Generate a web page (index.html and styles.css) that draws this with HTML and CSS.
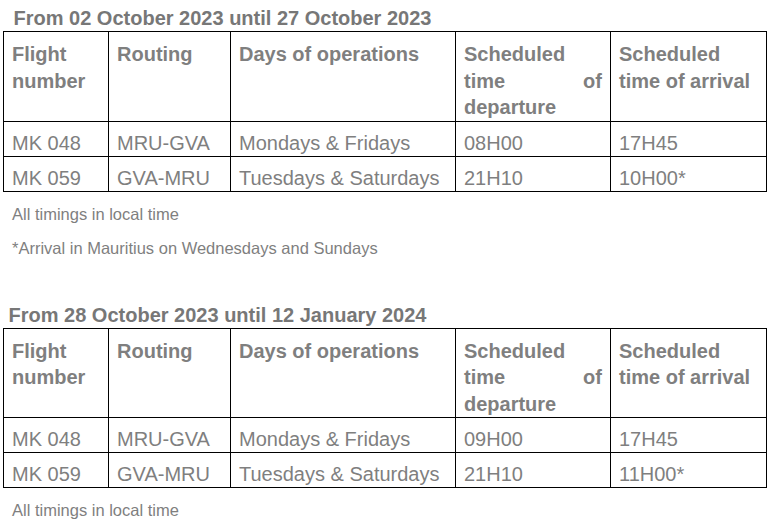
FILE: index.html
```html
<!DOCTYPE html>
<html lang="en">
<head>
<meta charset="utf-8">
<title>Flight schedule</title>
<link rel="stylesheet" href="styles.css">
</head>
<body>
<div class="page">
  <section class="period">
    <h2 class="period-title">From 02 October 2023 until 27 October 2023</h2>
    <table class="schedule">
      <colgroup>
        <col class="c-flight"><col class="c-route"><col class="c-days"><col class="c-dep"><col class="c-arr">
      </colgroup>
      <thead>
        <tr>
          <th>Flight number</th>
          <th>Routing</th>
          <th>Days of operations</th>
          <th class="justify">Scheduled time of departure</th>
          <th>Scheduled time of arrival</th>
        </tr>
      </thead>
      <tbody>
        <tr><td>MK 048</td><td>MRU-GVA</td><td>Mondays &amp; Fridays</td><td>08H00</td><td>17H45</td></tr>
        <tr><td>MK 059</td><td>GVA-MRU</td><td>Tuesdays &amp; Saturdays</td><td>21H10</td><td>10H00*</td></tr>
      </tbody>
    </table>
    <p class="note first">All timings in local time</p>
    <p class="note">*Arrival in Mauritius on Wednesdays and Sundays</p>
  </section>

  <section class="period second">
    <h2 class="period-title shifted">From 28 October 2023 until 12 January 2024</h2>
    <table class="schedule">
      <colgroup>
        <col class="c-flight"><col class="c-route"><col class="c-days"><col class="c-dep"><col class="c-arr">
      </colgroup>
      <thead>
        <tr>
          <th>Flight number</th>
          <th>Routing</th>
          <th>Days of operations</th>
          <th class="justify">Scheduled time of departure</th>
          <th>Scheduled time of arrival</th>
        </tr>
      </thead>
      <tbody>
        <tr><td>MK 048</td><td>MRU-GVA</td><td>Mondays &amp; Fridays</td><td>09H00</td><td>17H45</td></tr>
        <tr><td>MK 059</td><td>GVA-MRU</td><td>Tuesdays &amp; Saturdays</td><td>21H10</td><td>11H00*</td></tr>
      </tbody>
    </table>
    <p class="note first">All timings in local time</p>
  </section>
</div>
</body>
</html>
```

FILE: styles.css
```css
html, body {
  margin: 0;
  padding: 0;
  background: #ffffff;
}

body {
  font-family: "Liberation Sans", Arial, sans-serif;
  color: #7f7f7f;
}

.page {
  padding: 7px 0 0 3px;
}

.period-title {
  margin: 0 0 1px 0;
  padding-left: 10.5px;
  font-size: 20px;
  line-height: 23px;
  font-weight: bold;
  color: #777777;
}

.period-title.shifted {
  padding-left: 5.5px;
}

.period.second {
  margin-top: 46px;
}

.schedule {
  border-collapse: collapse;
  table-layout: fixed;
  width: 763px;
  font-size: 20px;
}

.c-flight { width: 105px; }
.c-route { width: 122px; }
.c-days { width: 225px; }
.c-dep { width: 155px; }
.c-arr { width: 156px; }

.schedule th,
.schedule td {
  border: 1px solid #000000;
  text-align: left;
  vertical-align: top;
}

.schedule th {
  padding: 9px 8px 0 8px;
  font-weight: bold;
  line-height: 26.5px;
}

.schedule th.justify {
  text-align: justify;
}

.schedule td {
  padding: 8px 8px 0 8px;
  line-height: 26px;
  font-weight: normal;
  white-space: nowrap;
}

.note {
  margin: 0 0 14px 0;
  padding-left: 9px;
  font-size: 16.5px;
  line-height: 20px;
}

.note.first {
  margin-top: 12px;
}
```
